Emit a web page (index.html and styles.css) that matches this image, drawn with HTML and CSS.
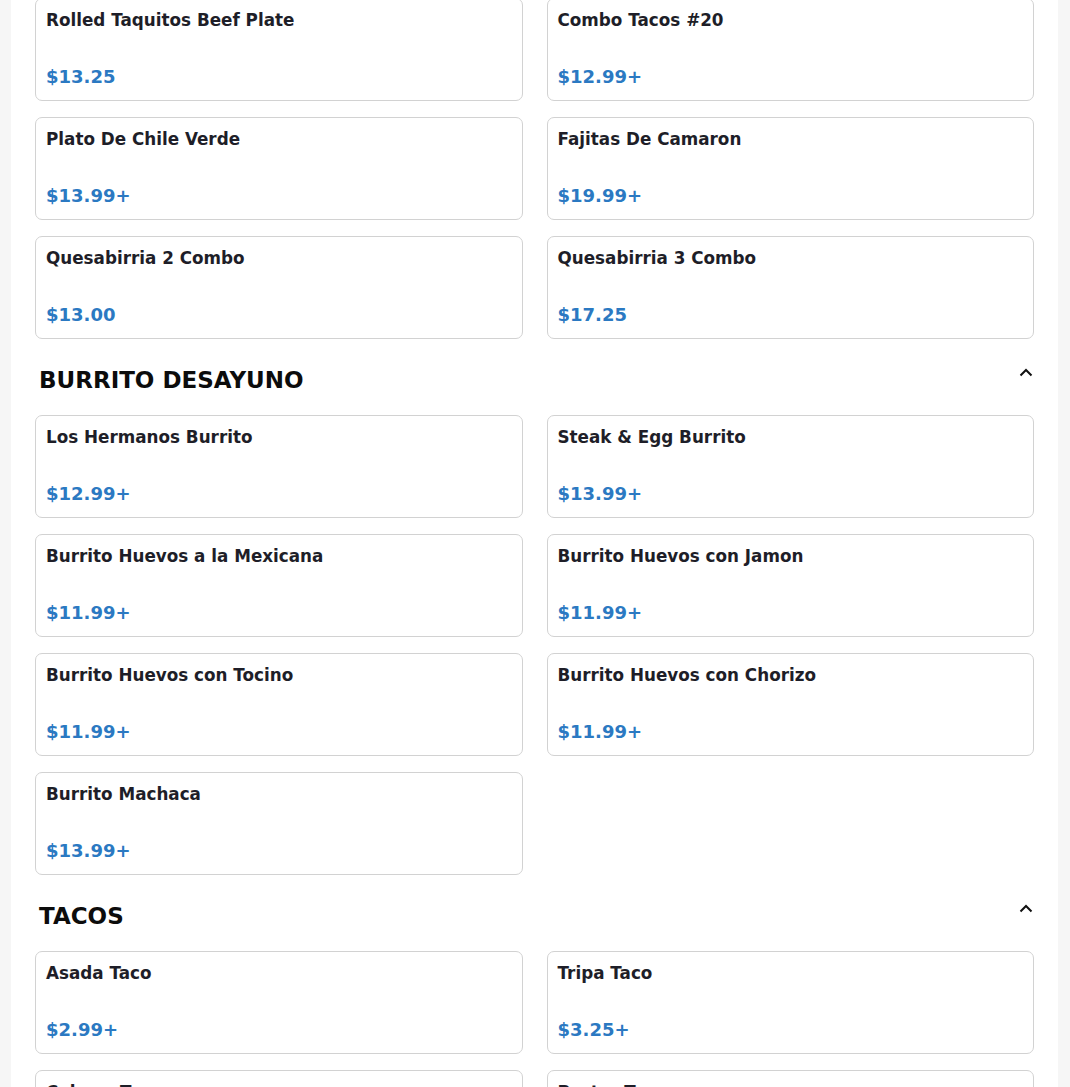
FILE: index.html
```html
<!DOCTYPE html>
<html>
<head>
<meta charset="utf-8">
<link rel="stylesheet" href="styles.css">
</head>
<body>
<main class="menu">
  <section class="section">
    <div class="grid first">
      <div class="card"><div class="name">Rolled Taquitos Beef Plate</div><div class="price">$13.25</div></div>
      <div class="card"><div class="name">Combo Tacos #20</div><div class="price">$12.99+</div></div>
      <div class="card"><div class="name">Plato De Chile Verde</div><div class="price">$13.99+</div></div>
      <div class="card"><div class="name">Fajitas De Camaron</div><div class="price">$19.99+</div></div>
      <div class="card"><div class="name">Quesabirria 2 Combo</div><div class="price">$13.00</div></div>
      <div class="card"><div class="name">Quesabirria 3 Combo</div><div class="price">$17.25</div></div>
    </div>
  </section>
  <section class="section">
    <div class="head"><h2>BURRITO DESAYUNO</h2><svg class="chev" width="14" height="9" viewBox="0 0 14 9"><path d="M1.5 7.5 L7 2 L12.5 7.5" fill="none" stroke="#111" stroke-width="2"/></svg></div>
    <div class="grid">
      <div class="card"><div class="name">Los Hermanos Burrito</div><div class="price">$12.99+</div></div>
      <div class="card"><div class="name">Steak &amp; Egg Burrito</div><div class="price">$13.99+</div></div>
      <div class="card"><div class="name">Burrito Huevos a la Mexicana</div><div class="price">$11.99+</div></div>
      <div class="card"><div class="name">Burrito Huevos con Jamon</div><div class="price">$11.99+</div></div>
      <div class="card"><div class="name">Burrito Huevos con Tocino</div><div class="price">$11.99+</div></div>
      <div class="card"><div class="name">Burrito Huevos con Chorizo</div><div class="price">$11.99+</div></div>
      <div class="card"><div class="name">Burrito Machaca</div><div class="price">$13.99+</div></div>
    </div>
  </section>
  <section class="section">
    <div class="head"><h2>TACOS</h2><svg class="chev" width="14" height="9" viewBox="0 0 14 9"><path d="M1.5 7.5 L7 2 L12.5 7.5" fill="none" stroke="#111" stroke-width="2"/></svg></div>
    <div class="grid">
      <div class="card"><div class="name">Asada Taco</div><div class="price">$2.99+</div></div>
      <div class="card"><div class="name">Tripa Taco</div><div class="price">$3.25+</div></div>
      <div class="card"><div class="name">Cabeza Taco</div><div class="price">$2.99+</div></div>
      <div class="card"><div class="name">Pastor Taco</div><div class="price">$2.99+</div></div>
    </div>
  </section>
</main>
</body>
</html>
```
FILE: styles.css
```css
html, body {
  margin: 0;
  padding: 0;
  background: #f6f6f6;
  font-family: "DejaVu Sans", Verdana, sans-serif;
  overflow: hidden;
}
.menu {
  background: #fff;
  margin: -2px 12px 0 11px;
  padding: 0 24px 0 24px;
  min-height: 1200px;
}
.grid {
  display: grid;
  grid-template-columns: 1fr 1fr;
  column-gap: 24px;
  row-gap: 16px;
}
.card {
  border: 1px solid #d2d2d2;
  border-radius: 7px;
  height: 103px;
  box-sizing: border-box;
  padding: 9px 10px 11px 10px;
  display: flex;
  flex-direction: column;
  justify-content: space-between;
}
.name {
  font-size: 16.8px;
  font-weight: bold;
  color: #1e1e28;
  line-height: 24px;
}
.price {
  font-size: 18px;
  font-weight: bold;
  color: #2b79c2;
  line-height: 24px;
}
.head {
  display: flex;
  justify-content: space-between;
  align-items: flex-start;
  padding: 25px 1px 19px 4px;
}
.head h2 {
  margin: 0;
  font-size: 23px;
  font-weight: bold;
  color: #0c0c0c;
  line-height: 32px;
}
.chev {
  margin-top: 4px;
}
```
